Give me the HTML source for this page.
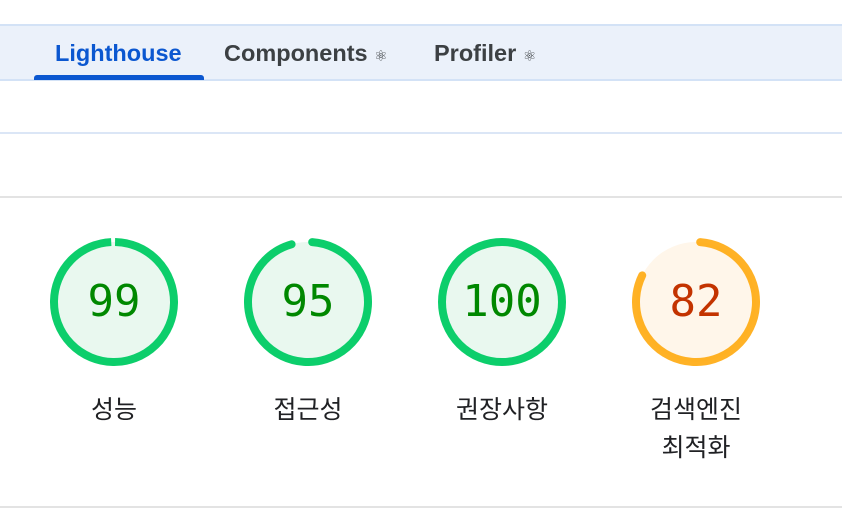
<!DOCTYPE html>
<html><head><meta charset="utf-8"><style>
body{margin:0;width:842px;height:514px;background:#fff;position:relative;overflow:hidden;font-family:"Liberation Sans","Noto Sans CJK KR",sans-serif}
.bar{position:absolute;left:0;right:0;top:24px;height:53px;background:#ebf1fa;border-top:2px solid #d3e2f6;border-bottom:2px solid #d3e2f6}
.tab{position:absolute;top:40px;font-size:23.5px;font-weight:bold;color:#3c4043}
.ul{position:absolute;left:34px;top:75px;width:170px;height:5px;background:#0b57d0;border-radius:3px 3px 0 0}
.l1{position:absolute;left:0;right:0;top:132px;height:2px;background:#dbe6f6}
.l2{position:absolute;left:0;right:0;top:196px;height:2px;background:#e3e3e3}
.l3{position:absolute;left:0;right:0;top:506px;height:2px;background:#e3e3e3}
.g{position:absolute;top:238px;width:128px;height:128px}
.num{position:absolute;top:238px;width:128px;height:128px;line-height:128px;text-align:center;font-family:"DejaVu Sans Mono","Liberation Mono",monospace;font-size:44px}
.lab{position:absolute;top:391px;width:160px;text-align:center;font-size:25px;line-height:38px;color:#202124}
</style></head><body>
<div class="bar"></div>
<div class="tab" style="left:55px;color:#0b57d0">Lighthouse</div>
<div class="tab" style="left:224px">Components <span style="font-size:15px;font-weight:normal">⚛</span></div>
<div class="tab" style="left:434px">Profiler <span style="font-size:15px;font-weight:normal">⚛</span></div>
<div class="ul"></div>
<div class="l1"></div><div class="l2"></div><div class="l3"></div>

<svg class="g" style="left:50px" viewBox="0 0 128 128"><circle cx="64" cy="64" r="60" fill="#e9f8ef"/><circle cx="64" cy="64" r="60" fill="none" stroke="#0cce6b" stroke-width="8" stroke-dasharray="373 400" transform="rotate(-89 64 64)"/></svg>
<div class="num" style="left:50px;color:#008800">99</div>
<div class="lab" style="left:34px">성능</div>

<svg class="g" style="left:244px" viewBox="0 0 128 128"><circle cx="64" cy="64" r="60" fill="#e9f8ef"/><circle cx="64" cy="64" r="60" fill="none" stroke="#0cce6b" stroke-width="8" stroke-dasharray="356 400" stroke-linecap="round" transform="rotate(-86 64 64)"/></svg>
<div class="num" style="left:244px;color:#008800">95</div>
<div class="lab" style="left:228px">접근성</div>

<svg class="g" style="left:438px" viewBox="0 0 128 128"><circle cx="64" cy="64" r="60" fill="#e9f8ef"/><circle cx="64" cy="64" r="60" fill="none" stroke="#0cce6b" stroke-width="8"/></svg>
<div class="num" style="left:438px;color:#008800">100</div>
<div class="lab" style="left:422px">권장사항</div>

<svg class="g" style="left:632px" viewBox="0 0 128 128"><circle cx="64" cy="64" r="60" fill="#fff6ea"/><circle cx="64" cy="64" r="60" fill="none" stroke="#ffa400" stroke-opacity=".85" stroke-width="8" stroke-dasharray="306 400" stroke-linecap="round" transform="rotate(-86 64 64)"/></svg>
<div class="num" style="left:632px;color:#c33300">82</div>
<div class="lab" style="left:616px">검색엔진<br>최적화</div>
</body></html>
